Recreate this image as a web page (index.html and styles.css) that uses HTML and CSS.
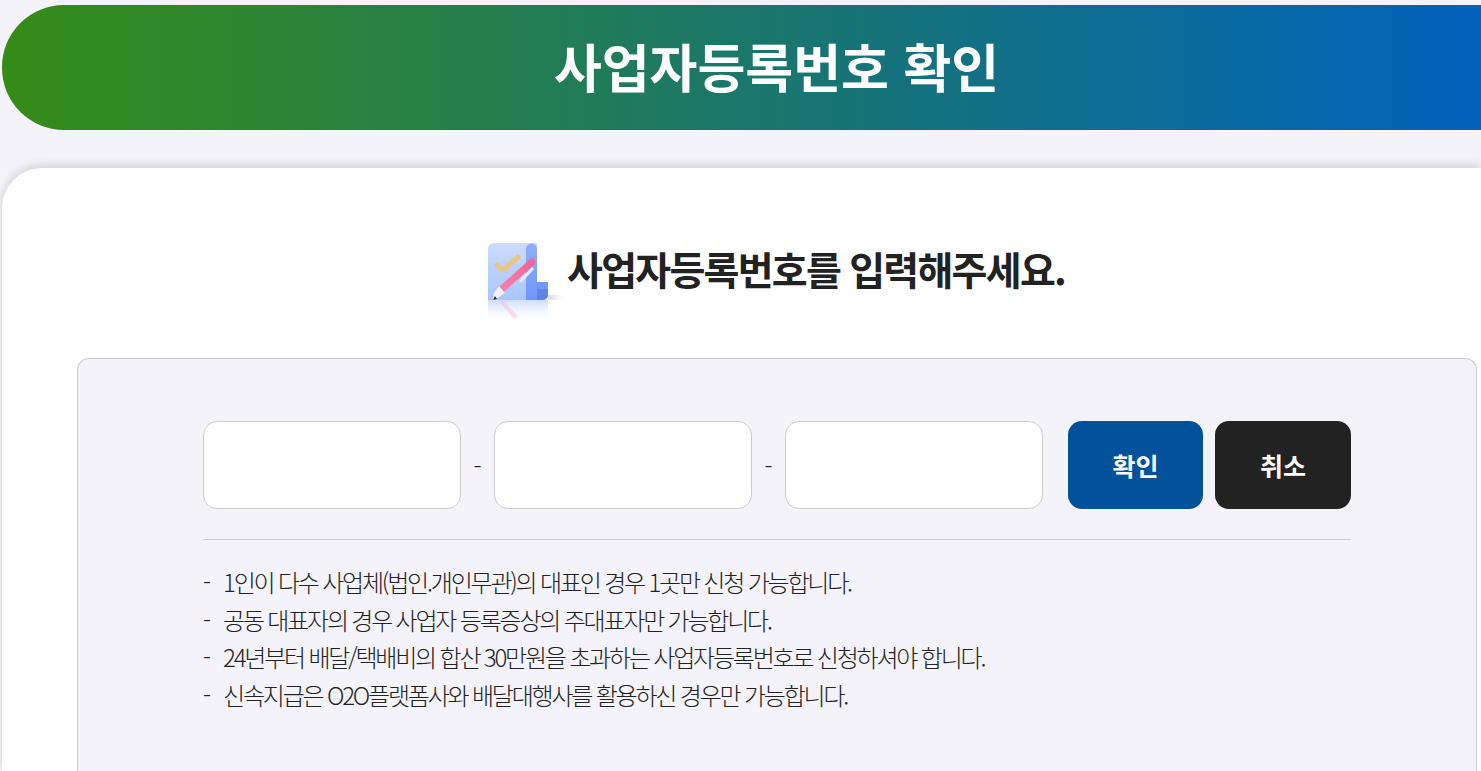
FILE: index.html
```html
<!DOCTYPE html>
<html lang="ko">
<head>
    <meta charset="UTF-8">
    <meta name="viewport" content="width=device-width, initial-scale=1.0">
    <title>사업자등록번호 확인</title>
    <link rel="stylesheet" href="styles.css">
</head>
<body>
    <div class="banner">
        <h1>사업자등록번호 확인</h1>
    </div>

    <div class="card">
        <div class="card-title">
            <svg class="title-icon" width="80" height="92" viewBox="0 0 80 92">
                <defs>
                    <linearGradient id="paper" x1="0" y1="0" x2="0" y2="1">
                        <stop offset="0" stop-color="#cbdcfd"/>
                        <stop offset="1" stop-color="#a9c5fb"/>
                    </linearGradient>
                    <linearGradient id="fold" x1="0" y1="0" x2="0" y2="1">
                        <stop offset="0" stop-color="#8fb0fd"/>
                        <stop offset="1" stop-color="#6f96fa"/>
                    </linearGradient>
                    <linearGradient id="fade" x1="0" y1="0" x2="0" y2="1">
                        <stop offset="0" stop-color="#c3d5fb" stop-opacity=".8"/>
                        <stop offset="1" stop-color="#e8effe" stop-opacity="0"/>
                    </linearGradient>
                    <linearGradient id="shadow" x1="0" y1="0" x2="1" y2="0">
                        <stop offset="0" stop-color="#dcdfe4"/>
                        <stop offset="1" stop-color="#ffffff"/>
                    </linearGradient>
                    <linearGradient id="pen" x1="0" y1="1" x2="1" y2="0">
                        <stop offset="0" stop-color="#f77fab"/>
                        <stop offset="1" stop-color="#f5649a"/>
                    </linearGradient>
                </defs>
                <!-- reflection and floor shadow -->
                <rect x="61" y="52" width="16" height="5" fill="url(#shadow)"/>
                <path d="M1 57h60v20H1z" fill="url(#fade)"/>
                <path d="M16 58l15 15-4 3-15-18z" fill="#f5b6cf" opacity=".45"/>
                <!-- sheet -->
                <path d="M7 0h43v57H1V6a6 6 0 0 1 6-6z" fill="url(#paper)"/>
                <path d="M39 6a5.500 5.500 0 0 1 11 0v51H39z" fill="url(#fold)"/>
                <path d="M50 39h11v13a5 5 0 0 1-5 5h-6z" fill="#7198fa"/>
                <path d="M50 46h11v6a5 5 0 0 1-5 5h-6z" fill="#5476dc" opacity=".6"/>
                <!-- check and pen -->
                <path d="M10 22l6 5 15-13" fill="none" stroke="#e9c583" stroke-width="5" stroke-linecap="round" stroke-linejoin="round"/>
                <path d="M33 39l13-14" stroke="#e3ebfe" stroke-width="3"/>
                <path d="M15 46l30-27" stroke="url(#pen)" stroke-width="7" stroke-linecap="round"/>
                <path d="M12 43l6 7-6 4-6 3 1-7z" fill="#f5eef1"/>
                <path d="M8 53l2 3-4 1z" fill="#333"/>
            </svg>
            <h2>사업자등록번호를 입력해주세요.</h2>
        </div>

        <div class="panel">
            <div class="form-row">
                <input type="text" class="num-input">
                <span class="dash">-</span>
                <input type="text" class="num-input">
                <span class="dash">-</span>
                <input type="text" class="num-input">
                <button class="btn btn-ok">확인</button>
                <button class="btn btn-cancel">취소</button>
            </div>
            <ul class="notes">
                <li>1인이 다수 사업체(법인.개인무관)의 대표인 경우 1곳만 신청 가능합니다.</li>
                <li>공동 대표자의 경우 사업자 등록증상의 주대표자만 가능합니다.</li>
                <li>24년부터 배달/택배비의 합산 30만원을 초과하는 사업자등록번호로 신청하셔야 합니다.</li>
                <li>신속지급은 O2O플랫폼사와 배달대행사를 활용하신 경우만 가능합니다.</li>
            </ul>
        </div>
    </div>
</body>
</html>
```

FILE: styles.css
```css
/* General styles */
html, body {
    height: 100%;
    overflow: hidden;
}
body {
    font-family: "Noto Sans CJK KR", "Noto Sans", sans-serif;
    margin: 0;
    padding: 5px 0 0 2px;
    box-sizing: border-box;
    background-color: #f3f3f9;
    color: #222;
}

/* Top banner */
.banner {
    height: 125px;
    box-sizing: border-box;
    display: flex;
    align-items: center;
    justify-content: center;
    padding: 0 0 3px 70px;
    border-radius: 62px 0 0 62px;
    background: linear-gradient(90deg, #368c17, #0062bd);
}
.banner h1 {
    margin: 0;
    font-size: 52px;
    font-weight: 700;
    line-height: 1;
    color: #fff;
}

/* White card */
.card {
    margin-top: 38px;
    padding: 70px 4px 0 75px;
    height: 603px;
    box-sizing: border-box;
    background-color: #fff;
    border-radius: 40px 0 0 0;
    box-shadow: 0 -3px 10px rgba(0, 0, 0, 0.14);
}
.card-title {
    display: flex;
    align-items: flex-start;
    justify-content: center;
    height: 120px;
    box-sizing: border-box;
    padding-top: 5px;
    padding-right: 2px;
}
.title-icon {
    flex-shrink: 0;
}
.card-title h2 {
    margin: 0;
    font-size: 39px;
    font-weight: 700;
    letter-spacing: -1.75px;
    line-height: 50px;
    color: #222;
}

/* Grey panel, runs off the bottom of the window */
.panel {
    padding: 62px 125px 0;
    height: 413px;
    box-sizing: border-box;
    background-color: #f3f3f9;
    border: 1px solid #ccc;
    border-bottom: none;
    border-radius: 12px 12px 0 0;
}
.form-row {
    display: flex;
    align-items: center;
    padding-bottom: 30px;
    border-bottom: 1px solid #ccc;
}
.num-input {
    width: 258px;
    height: 88px;
    box-sizing: border-box;
    background-color: #fff;
    border: 1px solid #ccc;
    border-radius: 14px;
}
.dash {
    width: 33px;
    text-align: center;
    font-size: 24px;
    font-weight: 300;
}
.btn {
    height: 88px;
    width: 135px;
    border: none;
    border-radius: 14px;
    color: #fff;
    font-family: inherit;
    font-size: 25px;
    font-weight: 700;
}
.btn-ok {
    margin-left: 25px;
    background-color: #01529b;
}
.btn-cancel {
    margin-left: 12px;
    width: 136px;
    background-color: #222;
}
.notes {
    list-style: none;
    margin: 23px 0 0;
    padding: 0;
}
.notes li {
    position: relative;
    padding-left: 20px;
    font-size: 24px;
    font-weight: 300;
    letter-spacing: -2.2px;
    line-height: 37.5px;
}
.notes li::before {
    content: "-";
    position: absolute;
    left: 0;
}
```
